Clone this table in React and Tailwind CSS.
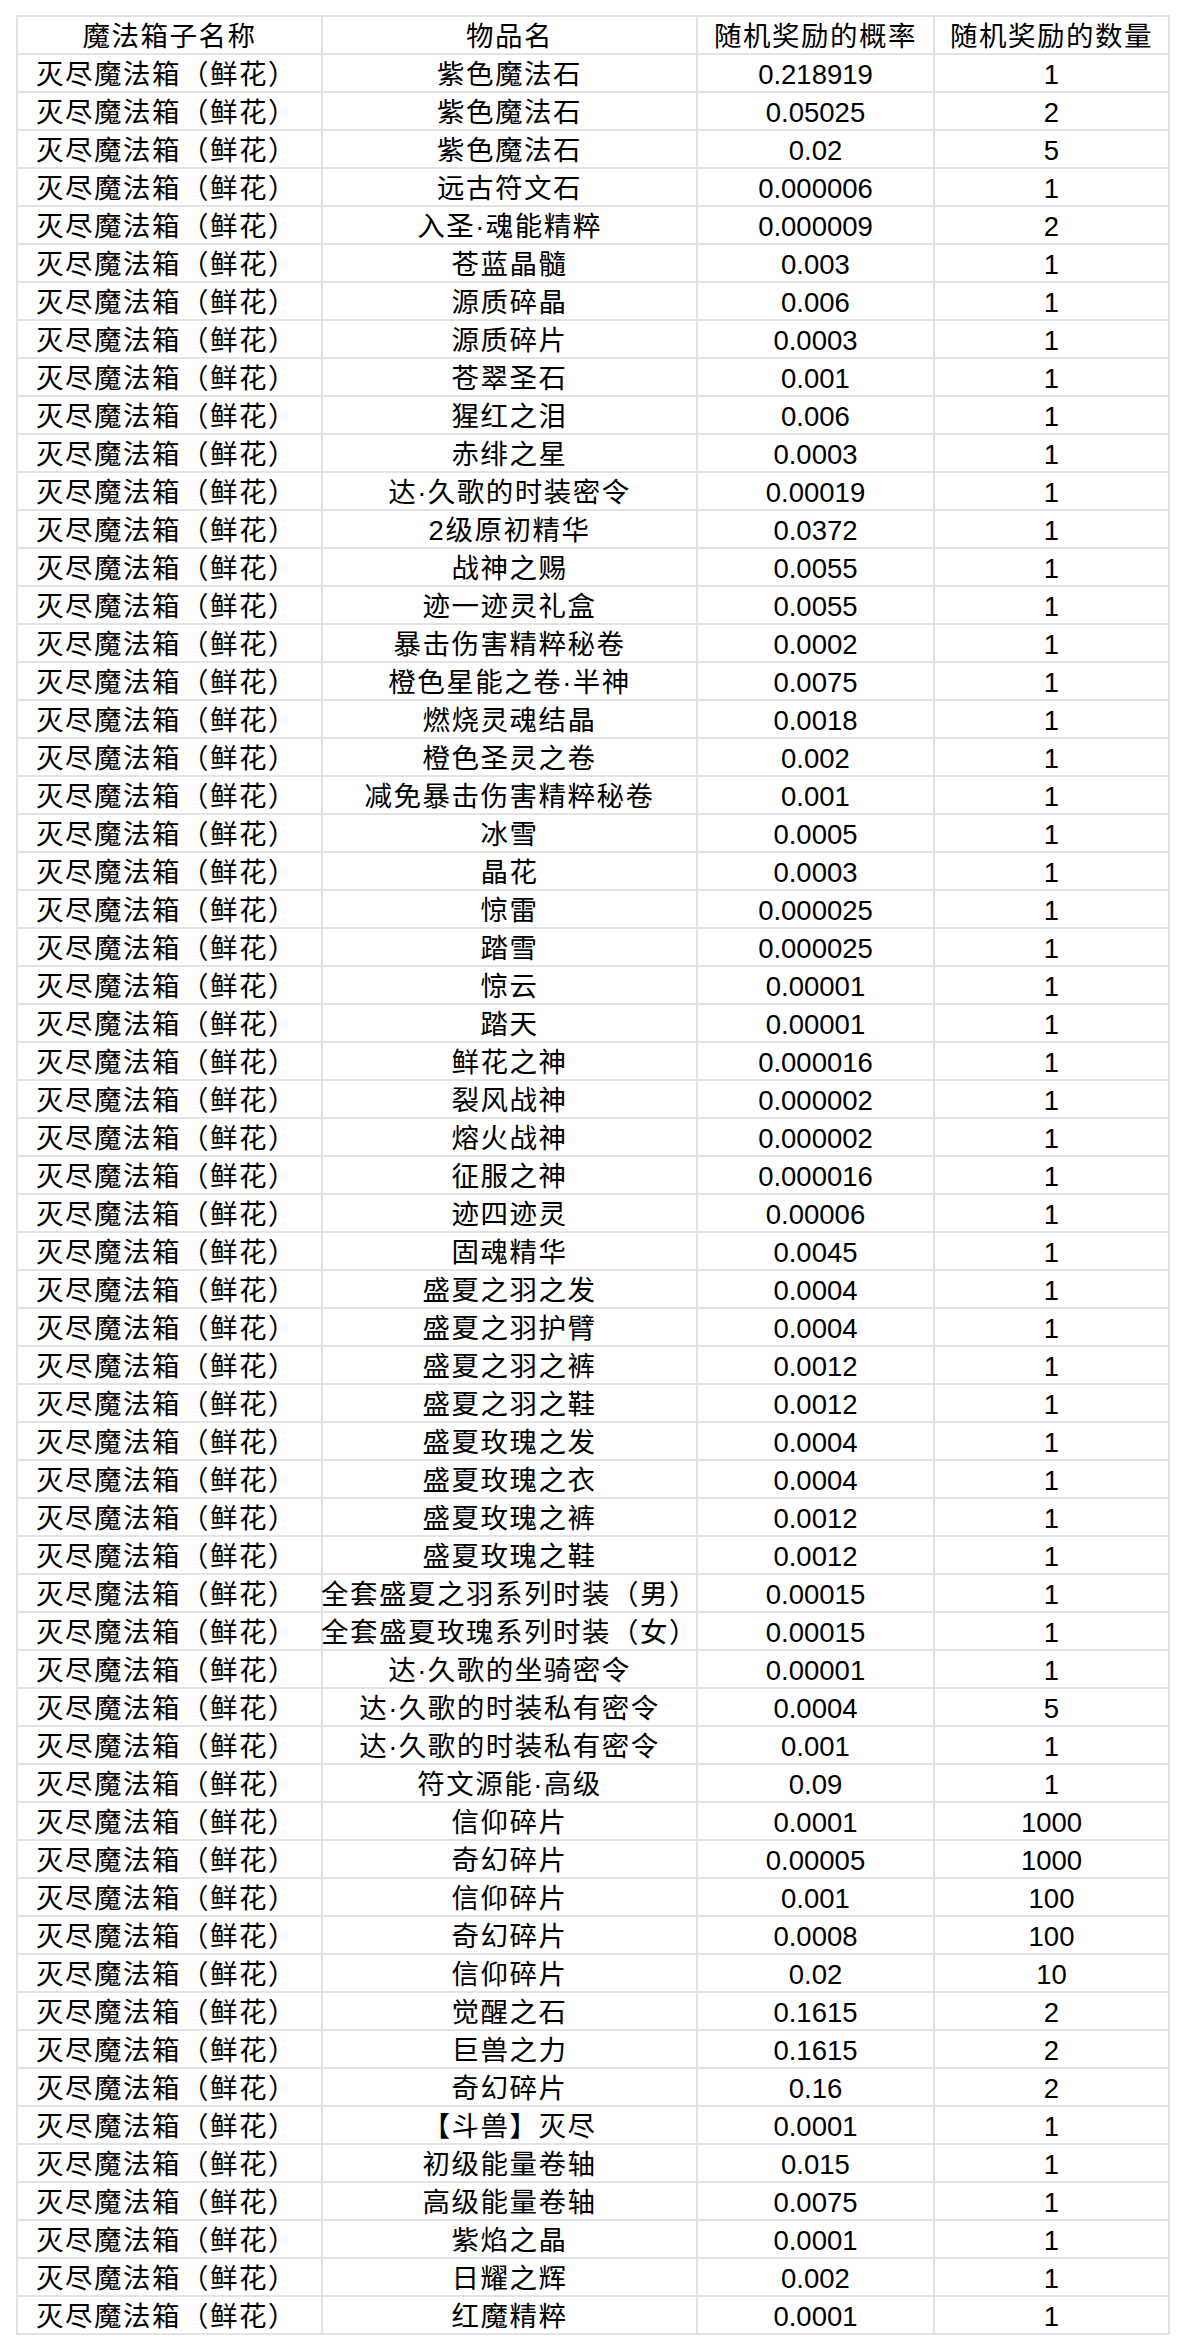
import React from "react";

const rows = [
  ["紫色魔法石", "0.218919", "1"],
  ["紫色魔法石", "0.05025", "2"],
  ["紫色魔法石", "0.02", "5"],
  ["远古符文石", "0.000006", "1"],
  ["入圣·魂能精粹", "0.000009", "2"],
  ["苍蓝晶髓", "0.003", "1"],
  ["源质碎晶", "0.006", "1"],
  ["源质碎片", "0.0003", "1"],
  ["苍翠圣石", "0.001", "1"],
  ["猩红之泪", "0.006", "1"],
  ["赤绯之星", "0.0003", "1"],
  ["达·久歌的时装密令", "0.00019", "1"],
  ["2级原初精华", "0.0372", "1"],
  ["战神之赐", "0.0055", "1"],
  ["迹一迹灵礼盒", "0.0055", "1"],
  ["暴击伤害精粹秘卷", "0.0002", "1"],
  ["橙色星能之卷·半神", "0.0075", "1"],
  ["燃烧灵魂结晶", "0.0018", "1"],
  ["橙色圣灵之卷", "0.002", "1"],
  ["减免暴击伤害精粹秘卷", "0.001", "1"],
  ["冰雪", "0.0005", "1"],
  ["晶花", "0.0003", "1"],
  ["惊雷", "0.000025", "1"],
  ["踏雪", "0.000025", "1"],
  ["惊云", "0.00001", "1"],
  ["踏天", "0.00001", "1"],
  ["鲜花之神", "0.000016", "1"],
  ["裂风战神", "0.000002", "1"],
  ["熔火战神", "0.000002", "1"],
  ["征服之神", "0.000016", "1"],
  ["迹四迹灵", "0.00006", "1"],
  ["固魂精华", "0.0045", "1"],
  ["盛夏之羽之发", "0.0004", "1"],
  ["盛夏之羽护臂", "0.0004", "1"],
  ["盛夏之羽之裤", "0.0012", "1"],
  ["盛夏之羽之鞋", "0.0012", "1"],
  ["盛夏玫瑰之发", "0.0004", "1"],
  ["盛夏玫瑰之衣", "0.0004", "1"],
  ["盛夏玫瑰之裤", "0.0012", "1"],
  ["盛夏玫瑰之鞋", "0.0012", "1"],
  ["全套盛夏之羽系列时装（男）", "0.00015", "1"],
  ["全套盛夏玫瑰系列时装（女）", "0.00015", "1"],
  ["达·久歌的坐骑密令", "0.00001", "1"],
  ["达·久歌的时装私有密令", "0.0004", "5"],
  ["达·久歌的时装私有密令", "0.001", "1"],
  ["符文源能·高级", "0.09", "1"],
  ["信仰碎片", "0.0001", "1000"],
  ["奇幻碎片", "0.00005", "1000"],
  ["信仰碎片", "0.001", "100"],
  ["奇幻碎片", "0.0008", "100"],
  ["信仰碎片", "0.02", "10"],
  ["觉醒之石", "0.1615", "2"],
  ["巨兽之力", "0.1615", "2"],
  ["奇幻碎片", "0.16", "2"],
  ["【斗兽】灭尽", "0.0001", "1"],
  ["初级能量卷轴", "0.015", "1"],
  ["高级能量卷轴", "0.0075", "1"],
  ["紫焰之晶", "0.0001", "1"],
  ["日耀之辉", "0.002", "1"],
  ["红魔精粹", "0.0001", "1"],
];

function Cell({ children, left, cjk }) {
  return (
    <div
      className={
        "bg-white h-[36px] flex items-center whitespace-nowrap leading-none pt-[4px] " +
        (left ? "justify-start pl-[18px] " : "justify-center ") +
        (cjk ? "tracking-[1.5px]" : "")
      }
    >
      {children}
    </div>
  );
}

export default function App() {
  return (
    <div className="bg-white w-[1184px] h-[2350px] pt-[15px] pl-[16px] text-black text-[27.5px] font-['Liberation_Sans','Noto_Sans_CJK_SC',sans-serif]">
      <div className="grid grid-cols-[303px_373px_235px_233px] gap-[2px] p-[2px] bg-[#e3e3e3] w-[1154px]">
        <Cell cjk>魔法箱子名称</Cell>
        <Cell cjk>物品名</Cell>
        <Cell cjk>随机奖励的概率</Cell>
        <Cell cjk>随机奖励的数量</Cell>
        {rows.map((r, i) => (
          <React.Fragment key={i}>
            <Cell left cjk>灭尽魔法箱（鲜花）</Cell>
            <Cell cjk>{r[0]}</Cell>
            <Cell>{r[1]}</Cell>
            <Cell>{r[2]}</Cell>
          </React.Fragment>
        ))}
      </div>
    </div>
  );
}
